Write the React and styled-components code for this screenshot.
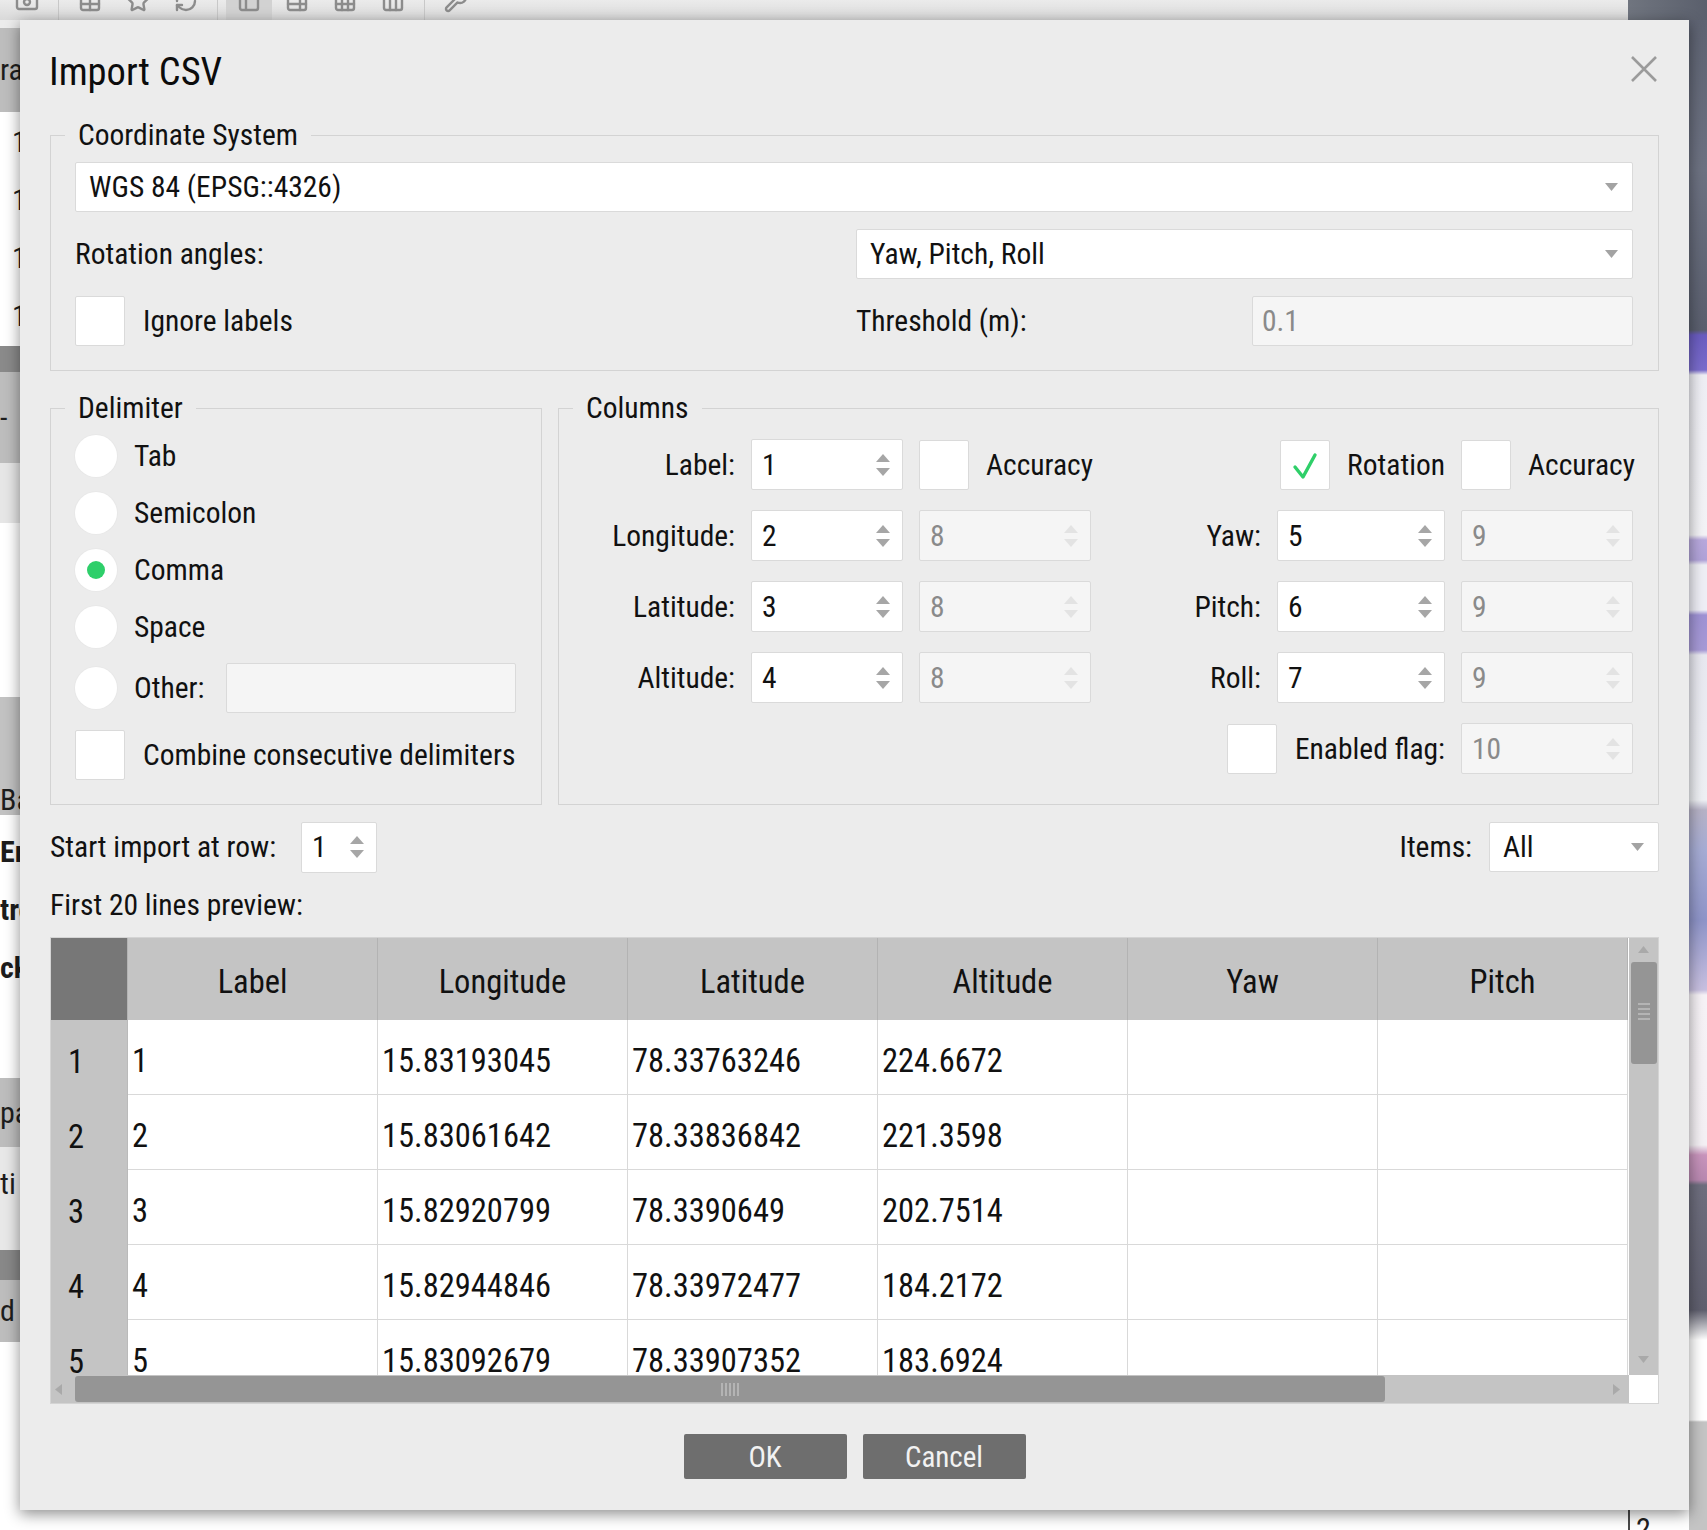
import React from "react";
import styled, { createGlobalStyle } from "styled-components";
import { Camera, Table, Star, RefreshCw, Table2, TableProperties, Sheet, Columns3, Wrench } from "lucide-react";

const GlobalStyle = createGlobalStyle`
  *, *::before, *::after { box-sizing: border-box; }
  body {
    margin: 0;
    font-family: "Roboto Condensed", "Liberation Sans", sans-serif;
    font-size: 29.5px;
    color: #111;
  }
`;

/* ---------- the application behind the dialog ---------- */

const Screen = styled.div`
  position: relative;
  width: 1707px;
  height: 1530px;
  overflow: hidden;
  display: grid;
  grid-template-rows: 20px 1fr;
  background: #fff;
`;

const AppToolbar = styled.div`
  display: flex;
  align-items: flex-start;
  padding-left: 4px;
  gap: 2px;
  background: linear-gradient(#ebebeb, #d9d9d9);
  overflow: hidden;
`;

const ToolButton = styled.div`
  width: 46px;
  height: 20px;
  display: flex;
  justify-content: center;
  background: ${(p) => (p.$active ? "#d2d2d2" : "transparent")};
  color: #8c8c8c;
  svg {
    margin-top: -11px;
  }
`;

const ToolSep = styled.div`
  width: 1px;
  height: 20px;
  margin: 0 6px;
  background: #c8c8c8;
`;

const ToolbarTail = styled.div`
  margin-left: auto;
  width: 79px;
  height: 20px;
  background: linear-gradient(90deg, #70757f, #5a5f6c);
`;

const AppBody = styled.div`
  display: grid;
  grid-template-columns: 20px 1fr 18px;
  min-height: 0;
`;

const LeftStrip = styled.div`
  display: flex;
  flex-direction: column;
  overflow: hidden;
`;

const Band = styled.div`
  flex: 0 0 ${(p) => p.$h}px;
  background: ${(p) => p.$bg};
  display: flex;
  flex-direction: column;
  justify-content: ${(p) => p.$justify || "center"};
  gap: 28px;
  padding-left: ${(p) => p.$indent || 0}px;
  font-size: 30px;
  font-weight: ${(p) => (p.$bold ? 700 : 400)};
  line-height: 30px;
  white-space: nowrap;
  color: #1d1d1d;
`;

const MiddlePane = styled.div`
  display: flex;
  justify-content: flex-end;
  align-items: flex-end;
`;

const SidePane = styled.div`
  width: 61px;
  height: 80px;
  border-left: 2px solid #4a4a4a;
  padding-left: 6px;
  font-size: 30px;
  line-height: 30px;
  display: flex;
  align-items: flex-end;
  color: #222;
  margin-bottom: -14px;
`;

const RightStrip = styled.div`
  background: linear-gradient(
    to bottom,
    #5e6372 0,
    #6d7282 150px,
    #5a5f6e 310px,
    #6a5cc0 315px,
    #7a6ccc 350px,
    #eeeef4 355px,
    #f3f3f6 515px,
    #b7a8dc 520px,
    #b0a2d8 540px,
    #eeeef4 545px,
    #eeeef6 590px,
    #9e92d4 595px,
    #a79ad6 630px,
    #e8e8f0 635px,
    #eef0f4 780px,
    #b6b2c6 790px,
    #a6acd4 830px,
    #8e94c8 900px,
    #c8c0e0 970px,
    #f6f2f6 975px,
    #f4f0f4 1125px,
    #c894bc 1135px,
    #b888b0 1160px,
    #6e6e7e 1165px,
    #5f5f6e 1290px,
    #ffffff 1320px,
    #ffffff 1400px,
    #c4c4c4 1402px,
    #c4c4c4 100%
  );
`;

/* ---------- the dialog ---------- */

const Dialog = styled.div`
  position: absolute;
  left: 20px;
  top: 20px;
  width: 1669px;
  height: 1490px;
  padding: 0 30px 30px;
  background: #ececec;
  box-shadow: 0 4px 14px rgba(0, 0, 0, 0.45);
  display: flex;
  flex-direction: column;
  white-space: nowrap;
  & > * {
    flex-shrink: 0;
  }
`;

const Header = styled.div`
  height: 100px;
  padding-top: 2px;
  display: flex;
  align-items: center;
  justify-content: space-between;
`;

const Title = styled.h1`
  margin: 0 0 0 -1px;
  font-size: 38.5px;
  font-weight: 400;
  color: #0c0c0c;
`;

const CloseButton = styled.button`
  width: 28px;
  height: 28px;
  padding: 0;
  margin: -4px 1px 0 0;
  border: none;
  background: none;
  display: grid;
  place-items: center;
`;

const Group = styled.fieldset`
  margin: 0;
  min-width: 0;
  border: 1px solid #d3d3d3;
  padding: ${(p) => p.$pad};
  width: ${(p) => (p.$w ? `${p.$w}px` : "auto")};
  flex: ${(p) => (p.$grow ? "1 1 0" : "0 0 auto")};
  display: flex;
  flex-direction: column;
  gap: ${(p) => p.$gap || 0}px;
`;

const Legend = styled.legend`
  font-size: 29.5px;
  line-height: 30px;
  padding: 0 13px;
  margin-left: -10px;
`;

const Combo = styled.div`
  height: 50px;
  width: ${(p) => (p.$w ? `${p.$w}px` : "auto")};
  background: #fff;
  border: 1px solid #dadada;
  border-radius: 2px;
  padding: 0 14px 0 13px;
  display: flex;
  align-items: center;
  justify-content: space-between;
`;

const TwoCol = styled.div`
  display: grid;
  grid-template-columns: 781px 1fr;
  align-items: center;
`;

const CheckRow = styled.label`
  display: flex;
  align-items: center;
  gap: ${(p) => p.$gap || 17}px;
  justify-self: ${(p) => p.$justify || "start"};
  grid-column: ${(p) => p.$span || "auto"};
  margin-top: ${(p) => p.$mt || 0}px;
`;

const Box = styled.span`
  width: 50px;
  height: 50px;
  flex-shrink: 0;
  background: #fff;
  border: 1px solid #dadada;
  border-radius: 2px;
  display: grid;
  place-items: center;
`;

const SplitRow = styled.div`
  display: flex;
  align-items: center;
  justify-content: space-between;
`;

const Input = styled.div`
  width: ${(p) => (p.$w ? `${p.$w}px` : "auto")};
  flex: ${(p) => (p.$grow ? 1 : "0 0 auto")};
  height: 50px;
  margin-left: ${(p) => p.$ml || 0}px;
  padding-left: 9px;
  display: flex;
  align-items: center;
  background: ${(p) => (p.$disabled ? "#f5f5f5" : "#fff")};
  border: 1px solid #dadada;
  border-radius: 2px;
  color: ${(p) => (p.$disabled ? "#8a8a8a" : "#111")};
`;

const MiddleRow = styled.div`
  display: flex;
  gap: 16px;
  margin-top: 22px;
`;

const RadioRow = styled.label`
  display: flex;
  align-items: center;
  gap: 17px;
  height: ${(p) => p.$h || 42}px;
`;

const Radio = styled.span`
  width: 42px;
  height: 42px;
  flex-shrink: 0;
  border-radius: 50%;
  background: #fff;
  box-shadow: 0 0 0 1px #e8e8e8;
  display: grid;
  place-items: center;
  &::after {
    content: "";
    width: 18px;
    height: 18px;
    border-radius: 50%;
    background: ${(p) => (p.$checked ? "#2ecf6a" : "transparent")};
  }
`;

const ColumnsGrid = styled.div`
  display: grid;
  grid-template-columns: 152px 152px 172px 1fr 168px 172px;
  grid-auto-rows: 51px;
  column-gap: 16px;
  row-gap: 20px;
  align-items: center;
`;

const FieldLabel = styled.span`
  justify-self: end;
  grid-column: ${(p) => p.$col || "auto"};
`;

const Spin = styled.div`
  height: 51px;
  width: ${(p) => (p.$w ? `${p.$w}px` : "auto")};
  grid-column: ${(p) => p.$col || "auto"};
  padding: 0 12px 0 10px;
  display: flex;
  align-items: center;
  justify-content: space-between;
  background: ${(p) => (p.$disabled ? "#f5f5f5" : "#fff")};
  border: 1px solid #dadada;
  border-radius: 2px;
  color: ${(p) => (p.$disabled ? "#8a8a8a" : "#111")};
`;

const BottomRow = styled.div`
  margin-top: 17px;
  height: 50px;
  display: flex;
  align-items: center;
  justify-content: space-between;
`;

const Labeled = styled.div`
  display: flex;
  align-items: center;
  gap: ${(p) => p.$gap || 17}px;
`;

const PreviewLabel = styled.div`
  margin-top: 16px;
  line-height: 34px;
`;

const TableFrame = styled.div`
  margin-top: 15px;
  height: 467px;
  border: 1px solid #d4d4d4;
  background: #fff;
  display: grid;
  grid-template-columns: 1fr 29px;
  grid-template-rows: 1fr 28px;
`;

const Viewport = styled.div`
  overflow: hidden;
  min-height: 0;
`;

const DataGrid = styled.div`
  display: grid;
  grid-template-columns: 77px repeat(6, 250px);
  grid-template-rows: 82px;
  grid-auto-rows: 75px;
  font-size: 32.5px;
`;

const HeadCell = styled.div`
  background: ${(p) => (p.$corner ? "#777777" : "#c4c4c4")};
  border-right: 1px solid #b3b3b3;
  padding-top: 6px;
  display: flex;
  align-items: center;
  justify-content: center;
`;

const RowHead = styled.div`
  background: #c4c4c4;
  border-right: 1px solid #bababa;
  padding: 8px 0 0 17px;
  display: flex;
  align-items: center;
`;

const Cell = styled.div`
  border-right: 1px solid #d9d9d9;
  border-bottom: 1px solid #d9d9d9;
  padding: 8px 0 0 4px;
  display: flex;
  align-items: center;
`;

const VScroll = styled.div`
  grid-row: 1;
  grid-column: 2;
  background: #c4c4c4;
  display: flex;
  flex-direction: column;
  align-items: center;
  padding: 8px 0 12px;
`;

const HScroll = styled.div`
  background: #c4c4c4;
  display: flex;
  align-items: center;
  padding: 0 9px 0 4px;
`;

const Thumb = styled.div`
  background: #959595;
  border-radius: 3px;
  display: grid;
  place-items: center;
  ${(p) =>
    p.$vertical
      ? `width: 26px; height: 102px; margin: 9px 0 0 1px;`
      : `height: 26px; width: 1310px; margin-left: 13px;`}
`;

const Grip = styled.div`
  ${(p) =>
    p.$vertical
      ? `width: 12px; height: 20px;
         background: repeating-linear-gradient(#b4b4b4 0 2px, transparent 2px 5px);`
      : `width: 19px; height: 13px;
         background: repeating-linear-gradient(90deg, #b4b4b4 0 2px, transparent 2px 4px);`}
`;

const Spacer = styled.div`
  flex: 1;
`;

const Corner = styled.div`
  background: #fff;
`;

const ButtonRow = styled.div`
  margin-top: 30px;
  display: flex;
  justify-content: center;
  gap: 16px;
`;

const Button = styled.button`
  width: 163px;
  height: 45px;
  border: none;
  border-radius: 2px;
  background: #6e6e6e;
  color: #f2f2f2;
  font-family: inherit;
  font-size: 29px;
  padding: 0;
`;

/* ---------- small drawings ---------- */

const ComboArrow = () => (
  <svg width="13" height="8" viewBox="0 0 13 8">
    <polygon points="0,0 13,0 6.5,8" fill="#a3a3a3" />
  </svg>
);

const SpinArrows = ({ disabled }) => (
  <svg width="14" height="22" viewBox="0 0 14 22">
    <g fill={disabled ? "#e3e3e3" : "#a6a6a6"}>
      <polygon points="0,8 7,0 14,8" />
      <polygon points="0,14 14,14 7,22" />
    </g>
  </svg>
);

const Tick = () => (
  <svg width="50" height="50" viewBox="0 0 50 50">
    <path d="M14 26 L22 36 L34 14" fill="none" stroke="#2fcf69" strokeWidth="3.4" strokeLinecap="round" strokeLinejoin="round" />
  </svg>
);

const CloseIcon = () => (
  <svg width="26" height="26" viewBox="0 0 26 26">
    <path d="M1 1 L25 25 M25 1 L1 25" stroke="#9b9b9b" strokeWidth="2.6" />
  </svg>
);

const ScrollArrow = ({ dir }) => {
  const pts = {
    up: "0,7 5.5,0 11,7",
    down: "0,0 11,0 5.5,7",
    left: "7,0 7,11 0,5.5",
    right: "0,0 0,11 7,5.5",
  }[dir];
  const horiz = dir === "left" || dir === "right";
  return (
    <svg width={horiz ? 7 : 11} height={horiz ? 11 : 7}>
      <polygon points={pts} fill="#a9a9a9" />
    </svg>
  );
};

/* ---------- pieces ---------- */

const Check = ({ checked }) => <Box>{checked && <Tick />}</Box>;

const SpinBox = ({ value, disabled, col, w }) => (
  <Spin $disabled={disabled} $col={col} $w={w}>
    <span>{value}</span>
    <SpinArrows disabled={disabled} />
  </Spin>
);

const leftBands = [
  { h: 8, bg: "#ececec" },
  { h: 84, bg: "#bdbdbd", text: ["ra"] },
  { h: 234, bg: "#ffffff", text: ["1", "1", "1", "1"], indent: 12 },
  { h: 26, bg: "#8a8a8a" },
  { h: 91, bg: "#bdbdbd", text: ["-"], indent: 0 },
  { h: 60, bg: "#e6e6e6" },
  { h: 174, bg: "#ffffff" },
  { h: 118, bg: "#c2c2c2", text: ["Ba"], justify: "flex-end" },
  { h: 263, bg: "#ffffff", text: ["Er", "tro", "ck"], justify: "flex-start", bold: true },
  { h: 69, bg: "#bdbdbd", text: ["pa"] },
  { h: 103, bg: "#e8e8e8", text: ["ti"], justify: "flex-start" },
  { h: 30, bg: "#888888" },
  { h: 62, bg: "#bdbdbd", text: ["d ("] },
];

const tools = [
  [Camera],
  "sep",
  [Table],
  [Star],
  [RefreshCw],
  "sep",
  [Table2, true],
  [TableProperties],
  [Sheet],
  [Columns3],
  "sep",
  [Wrench],
];

const rows = [
  ["1", "15.83193045", "78.33763246", "224.6672"],
  ["2", "15.83061642", "78.33836842", "221.3598"],
  ["3", "15.82920799", "78.3390649", "202.7514"],
  ["4", "15.82944846", "78.33972477", "184.2172"],
  ["5", "15.83092679", "78.33907352", "183.6924"],
];

const headers = ["Label", "Longitude", "Latitude", "Altitude", "Yaw", "Pitch"];

export default function App() {
  return (
    <Screen>
      <GlobalStyle />
      <AppToolbar>
        {tools.map((t, i) =>
          t === "sep" ? (
            <ToolSep key={i} />
          ) : (
            <ToolButton key={i} $active={t[1]}>
              {React.createElement(t[0], { size: 24, strokeWidth: 2.4 })}
            </ToolButton>
          )
        )}
        <ToolbarTail />
      </AppToolbar>
      <AppBody>
        <LeftStrip>
          {leftBands.map((b, i) => (
            <Band key={i} $h={b.h} $bg={b.bg} $indent={b.indent} $justify={b.justify} $bold={b.bold}>
              {(b.text || []).map((t, j) => (
                <span key={j} style={b.justify === "flex-start" && j === 0 ? { marginTop: 22 } : undefined}>
                  {t}
                </span>
              ))}
            </Band>
          ))}
        </LeftStrip>
        <MiddlePane>
          <SidePane>2</SidePane>
        </MiddlePane>
        <RightStrip />
      </AppBody>

      <Dialog>
        <Header>
          <Title>Import CSV</Title>
          <CloseButton aria-label="Close">
            <CloseIcon />
          </CloseButton>
        </Header>

        <Group $pad="12px 25px 24px 24px" $gap={17}>
          <Legend>Coordinate System</Legend>
          <Combo>
            <span>WGS 84 (EPSG::4326)</span>
            <ComboArrow />
          </Combo>
          <TwoCol>
            <span>Rotation angles:</span>
            <Combo>
              <span>Yaw, Pitch, Roll</span>
              <ComboArrow />
            </Combo>
          </TwoCol>
          <TwoCol>
            <CheckRow $gap={18}>
              <Check />
              <span>Ignore labels</span>
            </CheckRow>
            <SplitRow>
              <span>Threshold (m):</span>
              <Input $w={381} $disabled>
                0.1
              </Input>
            </SplitRow>
          </TwoCol>
        </Group>

        <MiddleRow>
          <Group $w={492} $pad="12px 25px 24px 24px" $gap={15}>
            <Legend>Delimiter</Legend>
            <RadioRow>
              <Radio />
              <span>Tab</span>
            </RadioRow>
            <RadioRow>
              <Radio />
              <span>Semicolon</span>
            </RadioRow>
            <RadioRow>
              <Radio $checked />
              <span>Comma</span>
            </RadioRow>
            <RadioRow>
              <Radio />
              <span>Space</span>
            </RadioRow>
            <RadioRow $h={50}>
              <Radio />
              <span>Other:</span>
              <Input $grow $ml={5} $disabled />
            </RadioRow>
            <CheckRow $gap={18} $mt={2}>
              <Check />
              <span>Combine consecutive delimiters</span>
            </CheckRow>
          </Group>

          <Group $grow $pad="16px 25px 24px 24px">
            <Legend>Columns</Legend>
            <ColumnsGrid>
              <FieldLabel>Label:</FieldLabel>
              <SpinBox value="1" />
              <CheckRow>
                <Check />
                <span>Accuracy</span>
              </CheckRow>
              <FieldLabel $col={5}>
                <CheckRow>
                  <Check checked />
                  <span>Rotation</span>
                </CheckRow>
              </FieldLabel>
              <CheckRow>
                <Check />
                <span>Accuracy</span>
              </CheckRow>

              <FieldLabel>Longitude:</FieldLabel>
              <SpinBox value="2" />
              <SpinBox value="8" disabled />
              <FieldLabel>Yaw:</FieldLabel>
              <SpinBox value="5" />
              <SpinBox value="9" disabled />

              <FieldLabel>Latitude:</FieldLabel>
              <SpinBox value="3" />
              <SpinBox value="8" disabled />
              <FieldLabel>Pitch:</FieldLabel>
              <SpinBox value="6" />
              <SpinBox value="9" disabled />

              <FieldLabel>Altitude:</FieldLabel>
              <SpinBox value="4" />
              <SpinBox value="8" disabled />
              <FieldLabel>Roll:</FieldLabel>
              <SpinBox value="7" />
              <SpinBox value="9" disabled />

              <CheckRow $span="4 / 6" $justify="end" $gap={18}>
                <Check />
                <span>Enabled flag:</span>
              </CheckRow>
              <SpinBox value="10" disabled col={6} />
            </ColumnsGrid>
          </Group>
        </MiddleRow>

        <BottomRow>
          <Labeled $gap={25}>
            <span>Start import at row:</span>
            <SpinBox value="1" w={76} />
          </Labeled>
          <Labeled>
            <span>Items:</span>
            <Combo $w={170}>
              <span>All</span>
              <ComboArrow />
            </Combo>
          </Labeled>
        </BottomRow>

        <PreviewLabel>First 20 lines preview:</PreviewLabel>

        <TableFrame>
          <Viewport>
            <DataGrid>
              <HeadCell $corner />
              {headers.map((h) => (
                <HeadCell key={h}>{h}</HeadCell>
              ))}
              {rows.map((r) => (
                <React.Fragment key={r[0]}>
                  <RowHead>{r[0]}</RowHead>
                  {r.map((v, i) => (
                    <Cell key={i}>{v}</Cell>
                  ))}
                  <Cell />
                  <Cell />
                </React.Fragment>
              ))}
            </DataGrid>
          </Viewport>
          <VScroll>
            <ScrollArrow dir="up" />
            <Thumb $vertical>
              <Grip $vertical />
            </Thumb>
            <Spacer />
            <ScrollArrow dir="down" />
          </VScroll>
          <HScroll>
            <ScrollArrow dir="left" />
            <Thumb>
              <Grip />
            </Thumb>
            <Spacer />
            <ScrollArrow dir="right" />
          </HScroll>
          <Corner />
        </TableFrame>

        <ButtonRow>
          <Button>OK</Button>
          <Button>Cancel</Button>
        </ButtonRow>
      </Dialog>
    </Screen>
  );
}
